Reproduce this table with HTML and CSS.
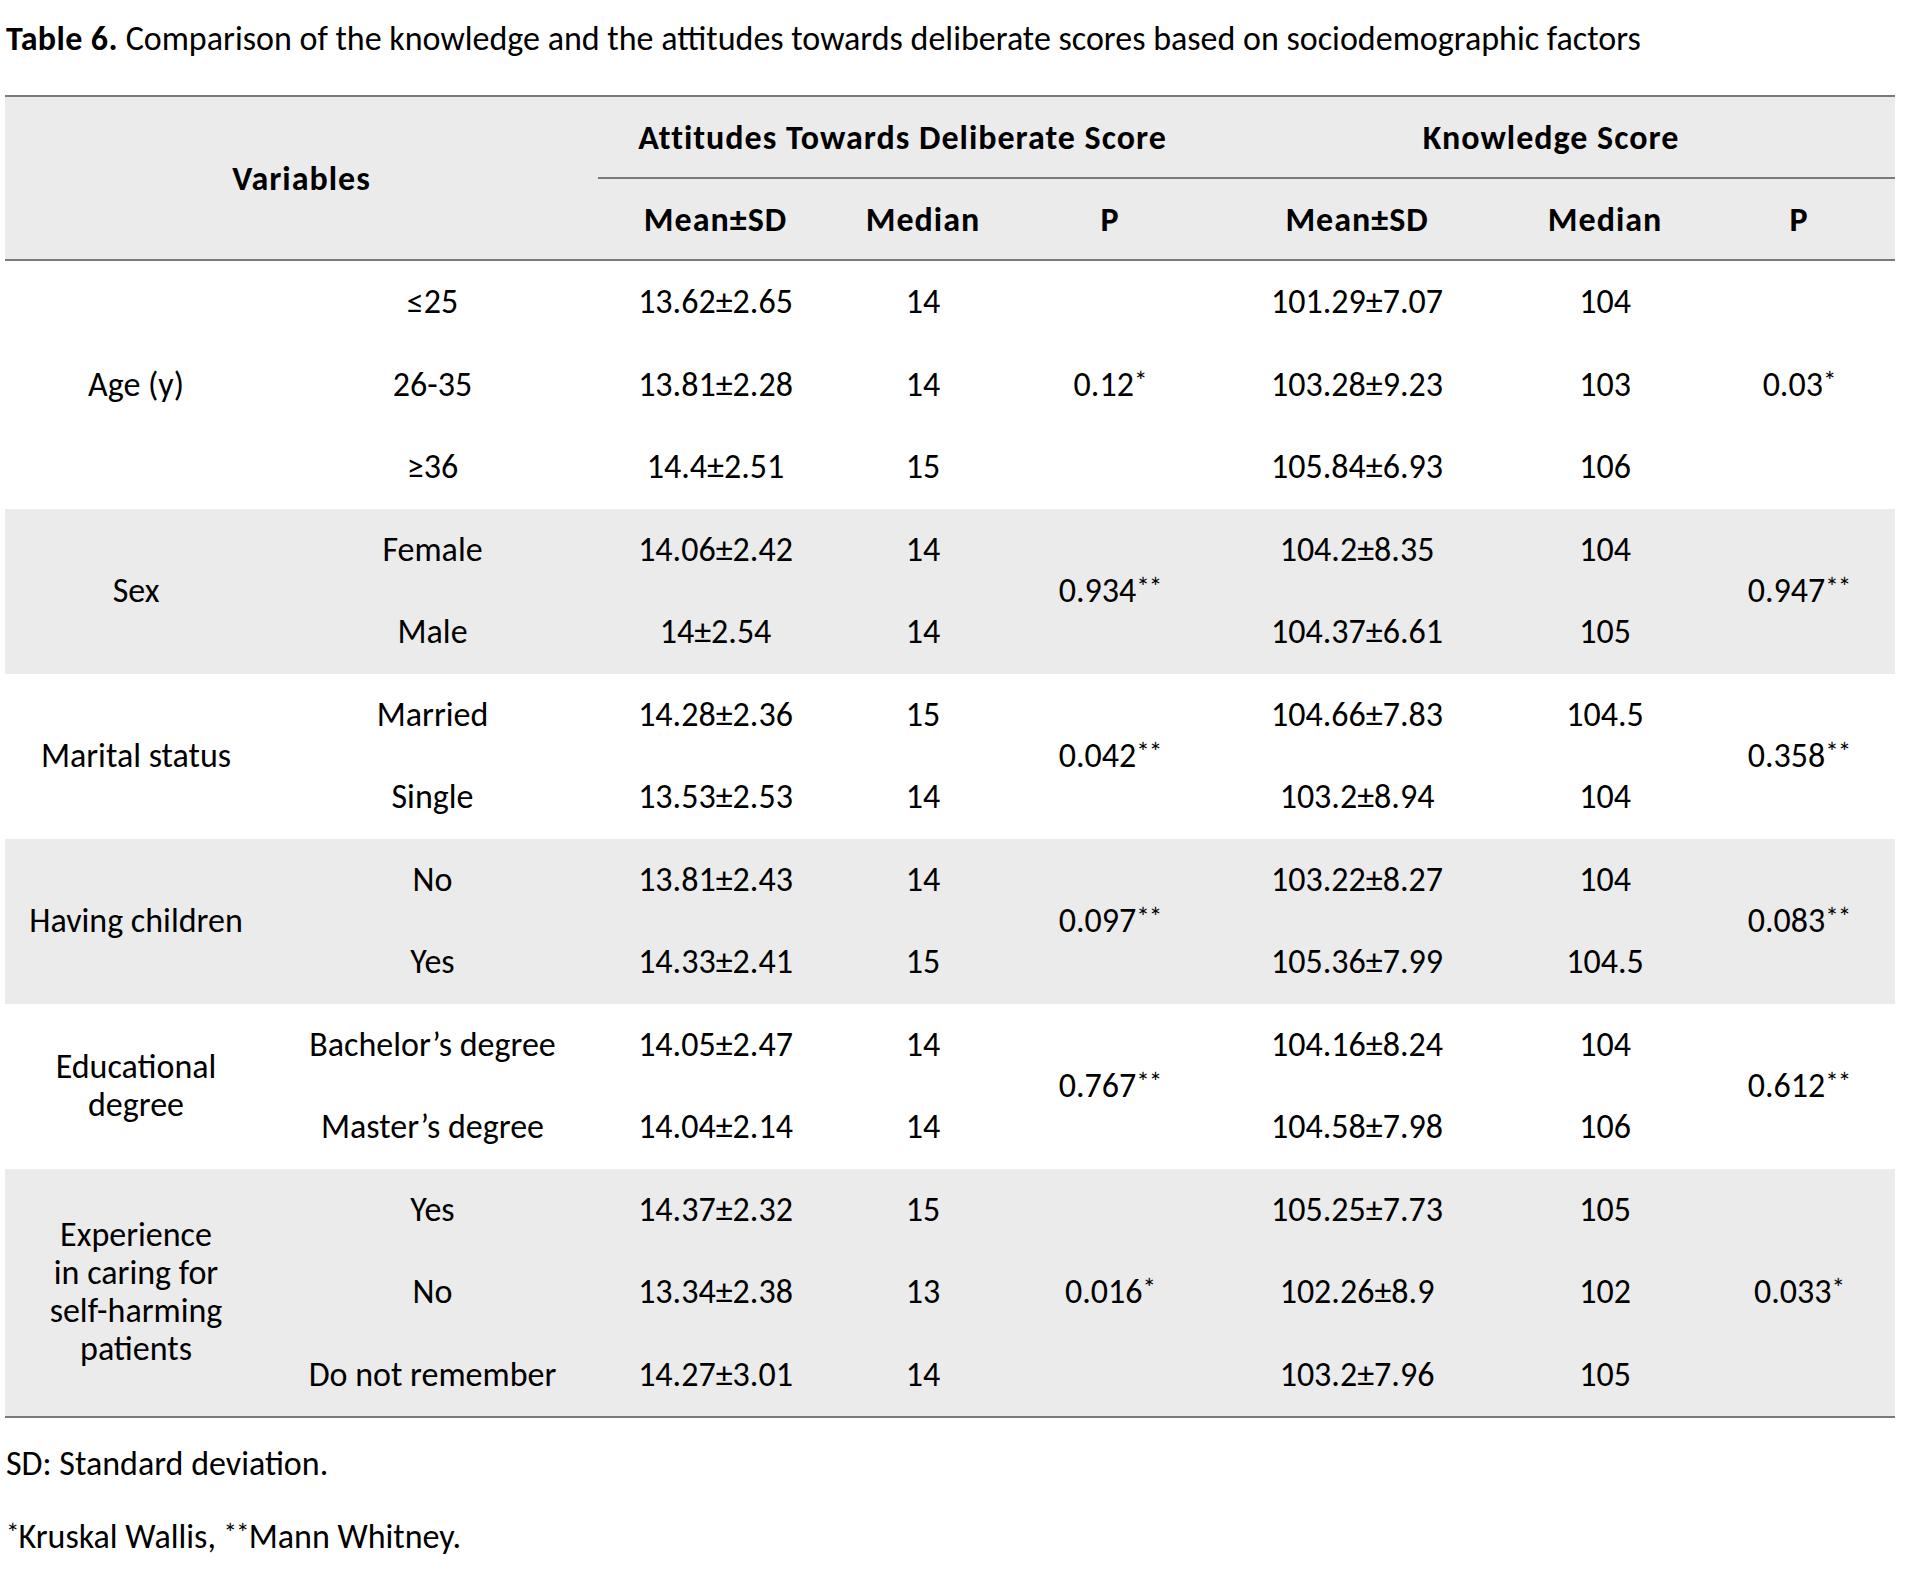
FILE: index.html
```html
<!DOCTYPE html>
<html lang="en">
<head>
<meta charset="utf-8">
<title>Table 6</title>
<link rel="stylesheet" href="styles.css">
</head>
<body>
<div class="page">
  <p class="caption"><b>Table 6.</b> Comparison of the knowledge and the attitudes towards deliberate scores based on sociodemographic factors</p>
  <table class="data">
    <colgroup>
      <col class="c1"><col class="c2"><col class="c3"><col class="c4"><col class="c5"><col class="c6"><col class="c7"><col class="c8">
    </colgroup>
    <thead>
      <tr class="h1">
        <th colspan="2" rowspan="2" class="var">Variables</th>
        <th colspan="3" class="grp">Attitudes Towards Deliberate Score</th>
        <th colspan="3" class="grp">Knowledge Score</th>
      </tr>
      <tr class="h2">
        <th>Mean±SD</th><th>Median</th><th>P</th>
        <th>Mean±SD</th><th>Median</th><th>P</th>
      </tr>
    </thead>
    <tbody>
      <tr><td rowspan="3">Age (y)</td><td>≤25</td><td>13.62±2.65</td><td>14</td><td rowspan="3">0.12<sup>*</sup></td><td>101.29±7.07</td><td>104</td><td rowspan="3">0.03<sup>*</sup></td></tr>
      <tr><td>26-35</td><td>13.81±2.28</td><td>14</td><td>103.28±9.23</td><td>103</td></tr>
      <tr><td>≥36</td><td>14.4±2.51</td><td>15</td><td>105.84±6.93</td><td>106</td></tr>
    </tbody>
    <tbody class="shade">
      <tr><td rowspan="2">Sex</td><td>Female</td><td>14.06±2.42</td><td>14</td><td rowspan="2">0.934<sup>**</sup></td><td>104.2±8.35</td><td>104</td><td rowspan="2">0.947<sup>**</sup></td></tr>
      <tr><td>Male</td><td>14±2.54</td><td>14</td><td>104.37±6.61</td><td>105</td></tr>
    </tbody>
    <tbody>
      <tr><td rowspan="2">Marital status</td><td>Married</td><td>14.28±2.36</td><td>15</td><td rowspan="2">0.042<sup>**</sup></td><td>104.66±7.83</td><td>104.5</td><td rowspan="2">0.358<sup>**</sup></td></tr>
      <tr><td>Single</td><td>13.53±2.53</td><td>14</td><td>103.2±8.94</td><td>104</td></tr>
    </tbody>
    <tbody class="shade">
      <tr><td rowspan="2">Having children</td><td>No</td><td>13.81±2.43</td><td>14</td><td rowspan="2">0.097<sup>**</sup></td><td>103.22±8.27</td><td>104</td><td rowspan="2">0.083<sup>**</sup></td></tr>
      <tr><td>Yes</td><td>14.33±2.41</td><td>15</td><td>105.36±7.99</td><td>104.5</td></tr>
    </tbody>
    <tbody>
      <tr><td rowspan="2" class="multi">Educational<br>degree</td><td>Bachelor’s degree</td><td>14.05±2.47</td><td>14</td><td rowspan="2">0.767<sup>**</sup></td><td>104.16±8.24</td><td>104</td><td rowspan="2">0.612<sup>**</sup></td></tr>
      <tr><td>Master’s degree</td><td>14.04±2.14</td><td>14</td><td>104.58±7.98</td><td>106</td></tr>
    </tbody>
    <tbody class="shade last">
      <tr><td rowspan="3" class="multi">Experience<br>in caring for<br>self-harming<br>patients</td><td>Yes</td><td>14.37±2.32</td><td>15</td><td rowspan="3">0.016<sup>*</sup></td><td>105.25±7.73</td><td>105</td><td rowspan="3">0.033<sup>*</sup></td></tr>
      <tr><td>No</td><td>13.34±2.38</td><td>13</td><td>102.26±8.9</td><td>102</td></tr>
      <tr><td>Do not remember</td><td>14.27±3.01</td><td>14</td><td>103.2±7.96</td><td>105</td></tr>
    </tbody>
  </table>
  <p class="note">SD: Standard deviation.</p>
  <p class="note note2"><sup>*</sup>Kruskal Wallis, <sup>**</sup>Mann Whitney.</p>
</div>
</body>
</html>
```

FILE: styles.css
```css
html, body {
  margin: 0;
  padding: 0;
  background: #ffffff;
}

body {
  font-family: Carlito, Calibri, Lato, "Liberation Sans", sans-serif;
  font-size: 34px;
  color: #000000;
}

.page {
  padding: 19px 5px 0 5px;
  width: 1890px;
}

.caption {
  margin: 0;
  line-height: 40px;
  padding-left: 1px;
}

.caption b {
  font-weight: 700;
  letter-spacing: 0.4px;
}

.data {
  margin-top: 36px;
  width: 1890px;
  border-collapse: collapse;
  border-spacing: 0;
  table-layout: fixed;
}

.c1 { width: 262px; }
.c2 { width: 331px; }
.c3 { width: 235px; }
.c4 { width: 180px; }
.c5 { width: 194px; }
.c6 { width: 300px; }
.c7 { width: 196px; }
.c8 { width: 192px; }

.data thead {
  background: #ebebeb;
}

.data thead th {
  font-weight: 700;
  text-align: center;
  vertical-align: middle;
  padding: 0;
  letter-spacing: 1px;
}

.data .h1 th {
  border-top: 2px solid #7a7a7a;
  height: 80px;
}

.data .h1 th.grp {
  border-bottom: 2px solid #7a7a7a;
}

.data .h2 th {
  height: 80px;
  border-bottom: 2px solid #7a7a7a;
}

.data th.var {
  border-bottom: 2px solid #7a7a7a;
}

.data td {
  height: 82.5px;
  padding: 0 4px;
  text-align: center;
  vertical-align: middle;
  line-height: 38px;
}

.data tbody.shade {
  background: #ebebeb;
}

.data tbody.last tr:last-child td,
.data tbody.last td[rowspan] {
  border-bottom: 2px solid #7a7a7a;
}

.data sup,
.note sup {
  font-size: 0.8em;
  line-height: 0;
  vertical-align: 0.22em;
  letter-spacing: -1px;
}

.note {
  margin: 26px 0 0 0;
  line-height: 40px;
  padding-left: 1px;
}

.note2 {
  margin-top: 33px;
}
```
